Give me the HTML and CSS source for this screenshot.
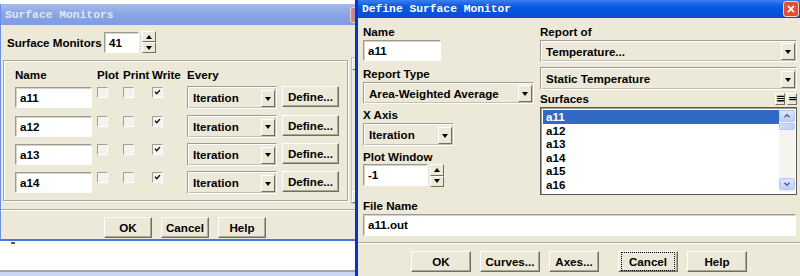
FILE: index.html
```html
<!DOCTYPE html>
<html>
<head>
<meta charset="utf-8">
<title>Surface Monitors</title>
<link rel="stylesheet" href="styles.css">
</head>
<body>
<div class="desk">

    <section class="win win-left">
        <div class="titlebar">Surface Monitors<span class="close close-off"></span></div>
        <div class="lbody">
            <div class="count-row">
                <span class="count-label">Surface Monitors</span>
                <div class="field count">41</div>
                <div class="spin"><span class="spin-btn"><i class="tri-up"></i></span><span class="spin-btn"><i class="tri-down"></i></span></div>
            </div>
            <div class="mid">
                <div class="group">
                    <div class="mon-grid">
                        <span class="head">Name</span>
                        <span class="head">Plot</span>
                        <span class="head">Print</span>
                        <span class="head">Write</span>
                        <span class="head">Every</span>
                        <span></span>

                        <div class="field name">a11</div>
                        <span class="check"></span>
                        <span class="check"></span>
                        <span class="check on"><svg viewBox="0 0 11 11"><polyline points="2.5,4.5 4.5,7 8.5,2.5"/></svg></span>
                        <div class="combo every">Iteration<span class="arrow"><i class="tri-down"></i></span></div>
                        <div class="btn define">Define...</div>

                        <div class="field name">a12</div>
                        <span class="check"></span>
                        <span class="check"></span>
                        <span class="check on"><svg viewBox="0 0 11 11"><polyline points="2.5,4.5 4.5,7 8.5,2.5"/></svg></span>
                        <div class="combo every">Iteration<span class="arrow"><i class="tri-down"></i></span></div>
                        <div class="btn define">Define...</div>

                        <div class="field name">a13</div>
                        <span class="check"></span>
                        <span class="check"></span>
                        <span class="check on"><svg viewBox="0 0 11 11"><polyline points="2.5,4.5 4.5,7 8.5,2.5"/></svg></span>
                        <div class="combo every">Iteration<span class="arrow"><i class="tri-down"></i></span></div>
                        <div class="btn define">Define...</div>

                        <div class="field name">a14</div>
                        <span class="check"></span>
                        <span class="check"></span>
                        <span class="check on"><svg viewBox="0 0 11 11"><polyline points="2.5,4.5 4.5,7 8.5,2.5"/></svg></span>
                        <div class="combo every">Iteration<span class="arrow"><i class="tri-down"></i></span></div>
                        <div class="btn define">Define...</div>
                    </div>
                </div>
                <div class="lscroll"><span class="lscroll-btn"></span><span class="lscroll-btn"></span></div>
            </div>
            <div class="sep"></div>
            <div class="btn-row">
                <div class="btn small">OK</div>
                <div class="btn small">Cancel</div>
                <div class="btn small">Help</div>
            </div>
        </div>
    </section>

    <div class="under"><span class="dash"></span></div>

    <section class="win win-right">
        <div class="titlebar">Define Surface Monitor<span class="close"><svg viewBox="0 0 16 16"><path d="M4.5 4.5 L11.5 11.5 M11.5 4.5 L4.5 11.5"/></svg></span></div>
        <div class="rbody">
            <div class="top-grid">
                <div class="col">
                    <span class="lbl">Name</span>
                    <div class="field rname">a11</div>
                    <span class="lbl gap6">Report Type</span>
                    <div class="combo rtype">Area-Weighted Average<span class="arrow"><i class="tri-down"></i></span></div>
                    <span class="lbl gap4">X Axis</span>
                    <div class="combo xaxis">Iteration<span class="arrow"><i class="tri-down"></i></span></div>
                    <span class="lbl gap4">Plot Window</span>
                    <div class="pw-row">
                        <div class="field pw">-1</div>
                        <div class="spin"><span class="spin-btn"><i class="tri-up"></i></span><span class="spin-btn"><i class="tri-down"></i></span></div>
                    </div>
                </div>
                <div class="col">
                    <span class="lbl">Report of</span>
                    <div class="combo wide">Temperature...<span class="arrow"><i class="tri-down"></i></span></div>
                    <div class="combo wide second">Static Temperature<span class="arrow"><i class="tri-down"></i></span></div>
                    <div class="surf-head">
                        <span>Surfaces</span>
                        <span class="mini-btns"><span class="mini">&#8801;</span><span class="mini">=</span></span>
                    </div>
                    <div class="listbox">
                        <ul class="items">
                            <li class="sel">a11</li>
                            <li>a12</li>
                            <li>a13</li>
                            <li>a14</li>
                            <li>a15</li>
                            <li>a16</li>
                        </ul>
                        <div class="vscroll">
                            <span class="sb-btn"><svg viewBox="0 0 14 12"><polyline points="4,7.5 7,4.5 10,7.5"/></svg></span>
                            <span class="sb-thumb"></span>
                            <span class="sb-btn down"><svg viewBox="0 0 14 12"><polyline points="4,4.5 7,7.5 10,4.5"/></svg></span>
                        </div>
                    </div>
                </div>
            </div>
            <span class="lbl gap4">File Name</span>
            <div class="field fname">a11.out</div>
            <div class="sep rsep"></div>
            <div class="btn-row rbtns">
                <div class="btn wide-btn">OK</div>
                <div class="btn wide-btn">Curves...</div>
                <div class="btn axes">Axes...</div>
                <div class="btn wide-btn focus"><span>Cancel</span></div>
                <div class="btn wide-btn">Help</div>
            </div>
        </div>
    </section>

</div>
</body>
</html>
```

FILE: styles.css
```css
* {
    box-sizing: border-box;
}
body {
    margin: 0;
    width: 800px;
    height: 276px;
    overflow: hidden;
    background: #fff;
    font: bold 11.6px "Liberation Sans", Arial, sans-serif;
    color: #000;
}
.desk {
    position: relative;
    width: 800px;
    height: 276px;
}

/* windows */
.win {
    position: absolute;
    background: #ece9d8;
    display: flex;
    flex-direction: column;
}
.win-left {
    left: 0;
    top: 4px;
    width: 369px;
    height: 237px;
    border-left: 1px solid #6d8ee6;
    border-bottom: 2px solid #4a74e4;
}
.win-right {
    left: 355px;
    top: 0;
    width: 445px;
    height: 276px;
    border-left: 3px solid #0a33c8;
}
.titlebar {
    position: relative;
    display: flex;
    align-items: center;
    font: bold 11.3px "Liberation Mono", "DejaVu Sans Mono", monospace;
    flex-shrink: 0;
}
.win-left .titlebar {
    height: 21px;
    padding-left: 4px;
    color: #dfe7f9;
    background: linear-gradient(#a6bcec, #8ba6e4 45%, #7f9ce0);
}
.win-right .titlebar {
    height: 18px;
    padding-left: 4px;
    color: #fff;
    background: linear-gradient(#3c7ff2, #0b5ae2 35%, #0653dc 70%, #0a4bd0);
}
.close {
    position: absolute;
    top: 1px;
    right: 1px;
    width: 16px;
    height: 16px;
    border: 1px solid #f4d6cc;
    border-radius: 3px;
    background: #e2502f;
}
.close svg {
    display: block;
    width: 14px;
    height: 14px;
}
.close path {
    stroke: #fff;
    stroke-width: 2;
    fill: none;
}
.close-off {
    top: 3px;
    right: 3px;
    background: #c48893;
    border-color: #e6d2dc;
}

/* shared controls */
.field {
    height: 21px;
    background: #fff;
    border: 1px solid;
    border-color: #9d9b90 #fff #fff #9d9b90;
    box-shadow: inset 1px 1px #d6d3c8;
    padding: 3px 0 0 4px;
    line-height: 14px;
}
.combo {
    display: flex;
    align-items: center;
    height: 22px;
    padding-left: 5px;
    border: 1px solid;
    border-color: #a09e94 #fff #fff #a09e94;
    box-shadow: inset 1px 1px #fff, inset -1px -1px #c4c1b4;
}
.arrow {
    margin-left: auto;
    margin-right: 1px;
    align-self: flex-end;
    margin-bottom: 1px;
    width: 14px;
    height: 17px;
    border: 1px solid;
    border-color: #fff #716f64 #716f64 #fff;
    display: flex;
    align-items: center;
    justify-content: center;
}
.tri-down, .tri-up {
    display: block;
    width: 0;
    height: 0;
    border-left: 3.5px solid transparent;
    border-right: 3.5px solid transparent;
}
.tri-down {
    border-top: 4px solid #000;
}
.tri-up {
    border-bottom: 4px solid #000;
}
.btn {
    height: 21px;
    display: flex;
    align-items: center;
    justify-content: center;
    border: 1px solid;
    border-color: #fff #716f64 #716f64 #fff;
    box-shadow: inset -1px -1px #aca899;
    background: #ece9d8;
}
.spin {
    display: flex;
    flex-direction: column;
    width: 14px;
    height: 22px;
}
.spin-btn {
    flex: 1;
    display: flex;
    align-items: center;
    justify-content: center;
    border: 1px solid;
    border-color: #fff #716f64 #716f64 #fff;
}
.check {
    width: 11px;
    height: 11px;
    border: 1px solid;
    border-color: #a3a196 #fff #fff #a3a196;
    background: #f3f2ec;
}
.check svg {
    display: block;
    width: 9px;
    height: 9px;
}
.check polyline {
    fill: none;
    stroke: #000;
    stroke-width: 1.5;
}
.sep {
    height: 2px;
    border-top: 1px solid #aca899;
    border-bottom: 1px solid #fff;
}
.btn-row {
    display: flex;
    justify-content: center;
}

/* left window */
.lbody {
    flex: 1;
    display: flex;
    flex-direction: column;
}
.count-row {
    display: flex;
    align-items: center;
    margin-top: 7px;
    padding-left: 6px;
}
.count-label {
    width: 97px;
}
.field.count {
    width: 35px;
}
.count-row .spin {
    margin-left: 3px;
    margin-top: -1px;
}
.mid {
    display: flex;
    margin-top: 7px;
}
.group {
    margin-left: 2px;
    width: 345px;
    height: 141px;
    border: 1px solid #aca899;
    box-shadow: inset 1px 1px #fff, 1px 1px #fff;
    padding: 7px 0 0 11px;
}
.mon-grid {
    display: grid;
    grid-template-columns: 82px 26px 29px 35px 95px 57px;
    grid-template-rows: 13px repeat(4, 22px);
    row-gap: 6.3px;
    align-items: start;
}
.head {
    line-height: 13px;
}
.field.name {
    width: 77px;
}
.combo.every {
    width: 90px;
    height: 23px;
    margin-top: -1px;
}
.btn.define {
    width: 57px;
    margin-top: -1px;
}
.lscroll {
    margin: -3px 0 0 3px;
    width: 14px;
    height: 147px;
    border: 1px solid #c4c1b4;
    display: flex;
    flex-direction: column;
    justify-content: space-between;
}
.lscroll-btn {
    height: 12px;
    border: 1px solid;
    border-color: #fff #716f64 #716f64 #fff;
}
.win-left .sep {
    margin-top: 5px;
}
.win-left .btn-row {
    margin-top: 6px;
    gap: 9px;
}
.btn.small {
    width: 48px;
}

/* area under the left window */
.under {
    position: absolute;
    left: 0;
    top: 241px;
    width: 355px;
    height: 35px;
    background: #fff;
    border-bottom: 4px solid #c9d6f2;
    box-shadow: inset 0 -2px #a3a3a3;
}
.dash {
    position: absolute;
    left: 11px;
    top: 1px;
    width: 4px;
    height: 2px;
    background: #555;
}

/* right window */
.rbody {
    flex: 1;
    display: flex;
    flex-direction: column;
    padding: 7px 0 0 5px;
}
.top-grid {
    display: grid;
    grid-template-columns: 177px 257px;
}
.col {
    display: flex;
    flex-direction: column;
    align-items: flex-start;
}
.lbl {
    line-height: 14px;
    height: 14px;
    margin-bottom: 1px;
}
.gap6 {
    margin-top: 6px;
}
.gap4 {
    margin-top: 4px;
}
.field.rname {
    width: 78px;
}
.combo.rtype {
    width: 171px;
}
.combo.xaxis {
    width: 91px;
    height: 23px;
}
.pw-row {
    display: flex;
    margin-top: -1px;
}
.field.pw {
    width: 65px;
    height: 22px;
}
.pw-row .spin {
    margin-left: 2px;
    height: 23px;
}
.combo.wide {
    width: 257px;
}
.combo.second {
    margin-top: 5px;
    height: 23px;
}
.surf-head {
    width: 257px;
    height: 13px;
    margin-top: 2px;
    display: flex;
    justify-content: space-between;
    align-items: center;
}
.mini-btns {
    display: flex;
    gap: 2px;
}
.mini {
    width: 10px;
    height: 12px;
    border: 1px solid;
    border-color: #fff #716f64 #716f64 #fff;
    font: bold 11px "DejaVu Sans", sans-serif;
    line-height: 10px;
    text-align: center;
}
.listbox {
    margin-top: 2px;
    width: 257px;
    height: 88px;
    border: 1px solid #5b5a52;
    box-shadow: inset 1px 1px #a09e94;
    background: #fff;
    display: flex;
    padding: 2px 1px 0 2px;
}
.items {
    list-style: none;
    margin: 0;
    padding: 0;
    flex: 1;
}
.items li {
    height: 13.6px;
    line-height: 13.6px;
    padding-left: 3px;
}
.items li.sel {
    background: #316ac5;
    color: #fff;
}
.vscroll {
    width: 16px;
    height: 82px;
    background: #f5f4ef;
    display: flex;
    flex-direction: column;
}
.sb-btn {
    height: 12px;
    border: 1px solid #b6c8f2;
    border-radius: 2px;
    background: linear-gradient(#dce6fd, #bccff9);
}
.sb-btn svg {
    display: block;
    width: 14px;
    height: 10px;
}
.sb-btn polyline {
    fill: none;
    stroke: #4d6185;
    stroke-width: 1.6;
}
.sb-btn.down {
    margin-top: auto;
    margin-bottom: 2px;
}
.sb-thumb {
    height: 7px;
    margin-top: 1px;
    border: 1px solid #b6c8f2;
    border-radius: 2px;
    background: linear-gradient(90deg, #cfdcfb, #bcd0f9);
}
.field.fname {
    width: 433px;
    height: 22px;
}
.rsep {
    margin-top: 6px;
    margin-left: -5px;
}
.rbtns {
    margin: 7px 0 0 -5px;
    gap: 9px;
}
.btn.wide-btn {
    width: 60px;
}
.btn.axes {
    width: 50px;
    margin-right: 10px;
}
.btn.focus span {
    outline: 1px dotted #000;
    outline-offset: 2px;
    padding: 0 5px;
}
```
